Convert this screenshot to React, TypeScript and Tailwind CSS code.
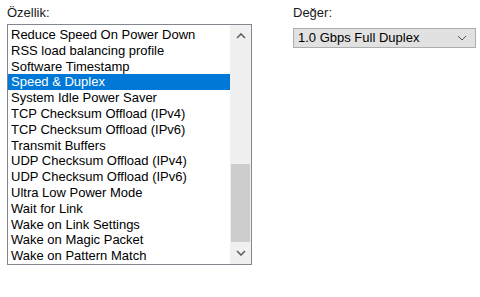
import React, { useState } from "react";

const items = [
  "Reduce Speed On Power Down",
  "RSS load balancing profile",
  "Software Timestamp",
  "Speed & Duplex",
  "System Idle Power Saver",
  "TCP Checksum Offload (IPv4)",
  "TCP Checksum Offload (IPv6)",
  "Transmit Buffers",
  "UDP Checksum Offload (IPv4)",
  "UDP Checksum Offload (IPv6)",
  "Ultra Low Power Mode",
  "Wait for Link",
  "Wake on Link Settings",
  "Wake on Magic Packet",
  "Wake on Pattern Match",
];

function Chevron({ up }: { up?: boolean }) {
  return (
    <svg width="10" height="6" viewBox="0 0 10 6">
      <path
        d={up ? "M1 5 L5 1 L9 5" : "M1 1 L5 5 L9 1"}
        fill="none"
        stroke="#606060"
        strokeWidth="1.6"
      />
    </svg>
  );
}

export default function App() {
  const [selected, setSelected] = useState("Speed & Duplex");

  return (
    <div className="w-[480px] h-[297px] bg-white flex pl-[7px] pt-[5px] font-['Liberation_Sans',Arial,sans-serif] text-[13px] leading-[16px] text-black">
      {/* Left: property list */}
      <div className="flex flex-col w-[245px]">
        <div className="h-[16px] text-[#1a1a1a]">Özellik:</div>
        <div className="mt-[3px] flex border border-[#828790] h-[241px]">
          <div className="flex-1 flex flex-col pt-[2px]">
            {items.map((it) => (
              <div
                key={it}
                onClick={() => setSelected(it)}
                className={`h-[15.8px] pl-[3px] whitespace-nowrap ${selected === it ? "bg-[#0078d7] text-white" : ""}`}
              >
                {it}
              </div>
            ))}
          </div>
          {/* Scrollbar */}
          <div className="w-[21px] bg-[#f0f0f0] flex flex-col">
            <div className="h-[21px] flex items-center justify-center">
              <Chevron up />
            </div>
            <div className="h-[118px]" />
            <div className="mx-[1px] h-[78px] bg-[#cdcdcd]" />
            <div className="flex-1 flex items-center justify-center">
              <Chevron />
            </div>
          </div>
        </div>
      </div>

      {/* Right: value */}
      <div className="ml-[41px] flex flex-col w-[183px]">
        <div className="h-[16px] text-[#1a1a1a]">Değer:</div>
        <div className="mt-[7px] h-[20px] border border-[#adadad] bg-[#e1e1e1] flex items-center pl-[4px] pr-[8px]">
          <span className="flex-1">1.0 Gbps Full Duplex</span>
          <svg width="10" height="6" viewBox="0 0 10 6">
            <path d="M1 1 L5 5 L9 1" fill="none" stroke="#555" strokeWidth="1" />
          </svg>
        </div>
      </div>
    </div>
  );
}
